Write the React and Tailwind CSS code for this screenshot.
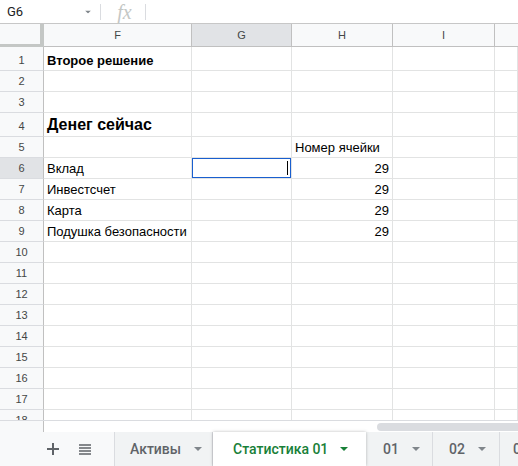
import React from "react";

const font = { fontFamily: "Arial, 'Liberation Sans', sans-serif" };

const rows = [
  { n: 1, h: "h-[24px]", f: "Второе решение", fCls: "font-bold" },
  { n: 2, h: "h-[21px]" },
  { n: 3, h: "h-[21px]" },
  { n: 4, h: "h-[24px]", f: "Денег сейчас", fCls: "font-bold text-[16px] leading-[18px]" },
  { n: 5, h: "h-[21px]", hl: "Номер ячейки" },
  { n: 6, h: "h-[21px]", f: "Вклад", hv: "29", sel: true },
  { n: 7, h: "h-[21px]", f: "Инвестсчет", hv: "29" },
  { n: 8, h: "h-[21px]", f: "Карта", hv: "29" },
  { n: 9, h: "h-[21px]", f: "Подушка безопасности", hv: "29" },
  { n: 10, h: "h-[21px]" },
  { n: 11, h: "h-[21px]" },
  { n: 12, h: "h-[21px]" },
  { n: 13, h: "h-[21px]" },
  { n: 14, h: "h-[21px]" },
  { n: 15, h: "h-[21px]" },
  { n: 16, h: "h-[21px]" },
  { n: 17, h: "h-[21px]" },
  { n: 18, h: "h-[21px]" },
];

function Caret({ className }) {
  return (
    <svg width="8" height="4" viewBox="0 0 8 4" className={className}>
      <path d="M0 0 L8 0 L4 4 Z" fill="currentColor" />
    </svg>
  );
}

function Row({ r }) {
  const cell =
    "h-full border-r border-b border-[#e2e3e3] flex items-end pb-[2px] overflow-hidden whitespace-nowrap";
  return (
    <div className={`flex ${r.h} text-[13px] leading-[15px] text-black`}>
      <div
        className={`w-[44px] shrink-0 h-full border-r border-b border-r-[#c0c0c0] border-b-[#dadce0] flex items-end pb-[3px] justify-center text-[11px] leading-[13px] text-[#444746] ${
          r.sel ? "bg-[#e1e3e6]" : "bg-[#f8f9fa]"
        }`}
      >
        {r.n}
      </div>
      <div className={`w-[148px] shrink-0 pl-[3px] ${cell} ${r.fCls || ""}`}>{r.f}</div>
      <div className={`w-[100px] shrink-0 relative ${cell}`}>
        {r.sel && (
          <div className="absolute left-[-1px] top-[-1px] w-[101px] h-[22px] border-2 border-[#1a5fcf]">
            <div className="absolute right-[2px] top-[2px] w-px h-[14px] bg-black" />
          </div>
        )}
      </div>
      <div className={`w-[101px] shrink-0 px-[3px] ${cell} ${r.hv ? "justify-end" : ""}`}>
        {r.hl || r.hv}
      </div>
      <div className={`w-[102px] shrink-0 ${cell}`} />
      <div className={`flex-1 ${cell}`} />
    </div>
  );
}

function Tab({ label, active, w, pl }) {
  return (
    <div
      className={`${w} ${pl} h-full flex items-center shrink-0 ${
        active
          ? "bg-white text-[#188038] shadow-[0_0_3px_rgba(60,64,67,0.35)] z-10 gap-[12px]"
          : "text-[#5f6368] border-r border-[#dadce0] gap-[13px]"
      }`}
    >
      <span className="text-[14px] font-medium" style={{ fontFamily: "Roboto, 'Liberation Sans', sans-serif" }}>
        {label}
      </span>
      <Caret className={active ? "text-[#188038]" : "text-[#80868b]"} />
    </div>
  );
}

export default function App() {
  return (
    <div className="w-[518px] h-[466px] overflow-hidden bg-white flex flex-col" style={font}>
      {/* formula bar */}
      <div className="h-[24px] shrink-0 border-b border-[#c7c7c7] flex items-center">
        <div
          className="w-[100px] h-full flex items-center pl-[7px] pr-[8px] text-[13px] text-[#202124]"
          style={{ fontFamily: "Roboto, 'Liberation Sans', sans-serif" }}
        >
          <span className="flex-1">G6</span>
          <Caret className="text-[#80868b] scale-75" />
        </div>
        <div className="w-px h-[16px] bg-[#dadce0]" />
        <div
          className="w-[44px] pl-[3px] text-center italic text-[20px] text-[#c4c7c5] leading-none"
          style={{ fontFamily: "'Liberation Serif', 'DejaVu Serif', serif" }}
        >
          fx
        </div>
        <div className="w-px h-[16px] bg-[#dadce0]" />
      </div>

      {/* column headers */}
      <div className="h-[23px] shrink-0 flex text-[11px] text-[#444746]">
        <div className="w-[44px] shrink-0 h-full bg-[#f8f9fa] border-r-4 border-b-[3px] border-[#c4c7c5]" />
        <div className="w-[148px] shrink-0 bg-[#f8f9fa] border-r border-b border-[#c0c0c0] flex items-center justify-center">F</div>
        <div className="w-[100px] shrink-0 bg-[#e1e3e6] border-r border-b border-[#c0c0c0] flex items-center justify-center">G</div>
        <div className="w-[101px] shrink-0 bg-[#f8f9fa] border-r border-b border-[#c0c0c0] flex items-center justify-center">H</div>
        <div className="w-[102px] shrink-0 bg-[#f8f9fa] border-r border-b border-[#c0c0c0] flex items-center justify-center">I</div>
        <div className="flex-1 bg-[#f8f9fa] border-b border-[#c0c0c0]" />
      </div>

      {/* grid body */}
      <div className="h-[373px] shrink-0 overflow-hidden">
        {rows.map((r) => (
          <Row key={r.n} r={r} />
        ))}
      </div>

      {/* horizontal scrollbar strip */}
      <div className="h-[12px] shrink-0 border-t border-[#dadce0] flex">
        <div className="w-[44px] h-full bg-[#f8f9fa] border-r border-[#c0c0c0]" />
        <div className="flex-1 pl-[333px] pt-[2px]">
          <div className="h-[8px] rounded-l-full bg-[#dadce0]" />
        </div>
      </div>

      {/* sheet tabs */}
      <div className="h-[34px] shrink-0 flex bg-[#f1f3f4]">
        <div className="w-[115px] h-full shrink-0 bg-[#f8f9fa] border-r border-[#dadce0] flex items-center pl-[47px] gap-[20px] text-[#5f6368]">
          <svg width="12" height="12" viewBox="0 0 12 12">
            <path d="M6 0v12M0 6h12" stroke="currentColor" strokeWidth="2" />
          </svg>
          <svg width="12" height="11" viewBox="0 0 12 11">
            <path d="M0 1h12M0 4h12M0 7h12M0 10h12" stroke="currentColor" strokeWidth="1.6" />
          </svg>
        </div>
        <Tab label="Активы" w="w-[98px]" pl="pl-[15px]" />
        <Tab label="Статистика 01" w="w-[153px]" pl="pl-[20px]" active />
        <Tab label="01" w="w-[67px]" pl="pl-[17px]" />
        <Tab label="02" w="w-[67px]" pl="pl-[16px]" />
        <div
          className="flex-1 h-full flex items-center pl-[13px] text-[14px] font-medium text-[#5f6368]"
          style={{ fontFamily: "Roboto, 'Liberation Sans', sans-serif" }}
        >
          0
        </div>
      </div>
    </div>
  );
}
